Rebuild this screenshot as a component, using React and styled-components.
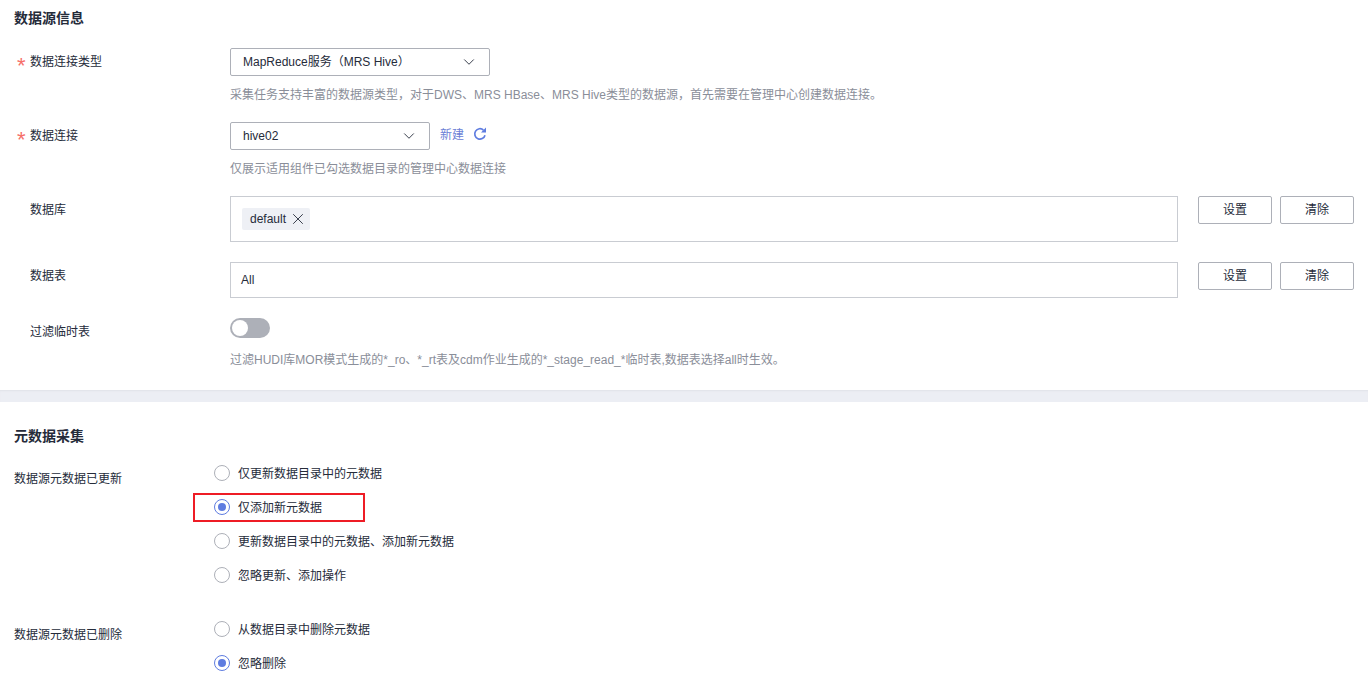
import styled, { createGlobalStyle } from 'styled-components';
import { X, ChevronDown } from 'lucide-react';

const GlobalStyle = createGlobalStyle`
  html, body {
    margin: 0;
    padding: 0;
    background: #fff;
    overflow: hidden;
  }
  body {
    font-family: "Liberation Sans", "Noto Sans CJK SC", sans-serif;
    font-size: 12px;
    line-height: 16px;
    color: #252b3a;
  }
`;

function Select({ value, width }) {
  return (
    <SelectBox $width={width}>
      <span>{value}</span>
      <ChevronDown size={18} strokeWidth={1.2} color="#252b3a" />
    </SelectBox>
  );
}

function RefreshIcon() {
  return (
    <RefreshSvg viewBox="0 0 16 16" width="16" height="16" fill="none">
      <path d="M13 9.2A5.2 5.2 0 1 1 11.4 4" stroke="#5e7ce0" strokeWidth="1.7" />
      <path d="M14 1.6V6.6H9z" fill="#5e7ce0" />
    </RefreshSvg>
  );
}

function Radio({ checked, marked, children }) {
  return (
    <RadioRow>
      <RadioDot $checked={checked} />
      <RadioText>{children}</RadioText>
      {marked && <RedMark />}
    </RadioRow>
  );
}

function Actions() {
  return (
    <ActionGroup>
      <Button>设置</Button>
      <Button>清除</Button>
    </ActionGroup>
  );
}

export default function App() {
  return (
    <Page>
      <GlobalStyle />
      <SourceSection>
        <Title>数据源信息</Title>
        <Fields>
          <Field $height={74}>
            <Label $required>数据连接类型</Label>
            <div>
              <Select value="MapReduce服务（MRS Hive）" width={260} />
              <Hint>采集任务支持丰富的数据源类型，对于DWS、MRS HBase、MRS Hive类型的数据源，首先需要在管理中心创建数据连接。</Hint>
            </div>
          </Field>
          <Field $height={74}>
            <Label $required>数据连接</Label>
            <div>
              <InlineRow>
                <Select value="hive02" width={200} />
                <LinkText>新建</LinkText>
                <RefreshIcon />
              </InlineRow>
              <Hint>仅展示适用组件已勾选数据目录的管理中心数据连接</Hint>
            </div>
          </Field>
          <Field $height={66}>
            <Label>数据库</Label>
            <WideRow>
              <TagBox>
                <Tag>
                  default
                  <X size={18} strokeWidth={1.2} />
                </Tag>
              </TagBox>
              <Actions />
            </WideRow>
          </Field>
          <Field $height={56}>
            <Label>数据表</Label>
            <WideRow>
              <TextBox>All</TextBox>
              <Actions />
            </WideRow>
          </Field>
          <Field>
            <Label>过滤临时表</Label>
            <div>
              <Switch />
              <SwitchHint>过滤HUDI库MOR模式生成的*_ro、*_rt表及cdm作业生成的*_stage_read_*临时表,数据表选择all时生效。</SwitchHint>
            </div>
          </Field>
        </Fields>
      </SourceSection>
      <Band />
      <CollectSection>
        <CollectTitle>元数据采集</CollectTitle>
        <RadioField>
          <RadioLabel>数据源元数据已更新</RadioLabel>
          <RadioList>
            <Radio>仅更新数据目录中的元数据</Radio>
            <Radio checked marked>仅添加新元数据</Radio>
            <Radio>更新数据目录中的元数据、添加新元数据</Radio>
            <Radio>忽略更新、添加操作</Radio>
          </RadioList>
        </RadioField>
        <RadioField>
          <RadioLabel>数据源元数据已删除</RadioLabel>
          <RadioList>
            <Radio>从数据目录中删除元数据</Radio>
            <Radio checked>忽略删除</Radio>
          </RadioList>
        </RadioField>
      </CollectSection>
    </Page>
  );
}

const Page = styled.div`
  width: 1368px;
  height: 692px;
  overflow: hidden;
  background: #fff;
`;

const SourceSection = styled.section`
  height: 390px;
  padding: 10px 14px 0;
  box-sizing: border-box;
`;

const Title = styled.h2`
  margin: 0 0 21px;
  height: 17px;
  line-height: 17px;
  font-size: 14px;
  font-weight: 700;
  color: #252b3a;
`;

const Fields = styled.div`
  display: flex;
  flex-direction: column;
`;

const Field = styled.div`
  display: grid;
  grid-template-columns: 216px 1fr;
  height: ${p => (p.$height ? `${p.$height}px` : 'auto')};
`;

const Label = styled.label`
  position: relative;
  padding-left: 16px;
  line-height: 28px;
  color: #252b3a;

  ${p =>
    p.$required &&
    `&::before {
      content: '*';
      position: absolute;
      left: 3px;
      top: 4px;
      color: #f66f6a;
      font-size: 22px;
    }`}
`;

const SelectBox = styled.div`
  display: flex;
  align-items: center;
  justify-content: space-between;
  box-sizing: border-box;
  width: ${p => p.$width}px;
  height: 28px;
  padding: 0 11px 0 12px;
  border: 1px solid #adb0b8;
  border-radius: 2px;
  background: #fff;
`;

const Hint = styled.p`
  margin: 11px 0 0;
  height: 16px;
  line-height: 16px;
  color: #8a8e99;
`;

const SwitchHint = styled(Hint)`
  margin-top: 14px;
`;

const InlineRow = styled.div`
  display: flex;
  align-items: center;
`;

const LinkText = styled.span`
  margin: -3px 0 0 10px;
  color: #6b80d6;
`;

const RefreshSvg = styled.svg`
  margin: -5px 0 0 8px;
`;

const WideRow = styled.div`
  display: flex;
  align-items: flex-start;
  gap: 20px;
`;

const TagBox = styled.div`
  display: flex;
  align-items: flex-start;
  box-sizing: border-box;
  width: 948px;
  height: 46px;
  padding: 11px 11px;
  border: 1px solid #c9ccd2;
`;

const Tag = styled.span`
  display: inline-flex;
  align-items: center;
  gap: 3px;
  height: 22px;
  padding: 0 3px 0 8px;
  border-radius: 2px;
  background: #eef0f5;
  color: #252b3a;
`;

const TextBox = styled.div`
  box-sizing: border-box;
  width: 948px;
  height: 36px;
  padding-left: 10px;
  line-height: 34px;
  border: 1px solid #c9ccd2;
`;

const ActionGroup = styled.div`
  display: flex;
  gap: 8px;
`;

const Button = styled.button`
  width: 74px;
  height: 28px;
  padding: 0;
  border: 1px solid #adb0b8;
  border-radius: 2px;
  background: #fff;
  color: #252b3a;
  font: inherit;
`;

const Switch = styled.div`
  position: relative;
  width: 40px;
  height: 20px;
  border-radius: 10px;
  background: #adb0b8;

  &::after {
    content: '';
    position: absolute;
    left: 2px;
    top: 2px;
    width: 16px;
    height: 16px;
    border-radius: 50%;
    background: #fff;
  }
`;

const Band = styled.div`
  height: 12px;
  background: #eceef4;
  box-shadow: inset 0 2px 2px -1px #e0e2e8;
`;

const CollectSection = styled.section`
  padding: 26px 14px 0;
`;

const CollectTitle = styled(Title)`
  margin-bottom: 11px;
`;

const RadioField = styled.div`
  display: grid;
  grid-template-columns: 200px 1fr;
  margin-bottom: 20px;
`;

const RadioLabel = styled.div`
  padding-top: 15px;
  line-height: 16px;
`;

const RadioList = styled.div`
  display: flex;
  flex-direction: column;
`;

const RadioRow = styled.div`
  position: relative;
  display: flex;
  align-items: center;
  gap: 8px;
  height: 34px;
`;

const RadioText = styled.span`
  padding-top: 2px;
`;

const RadioDot = styled.span`
  position: relative;
  box-sizing: border-box;
  width: 16px;
  height: 16px;
  border: 1px solid ${p => (p.$checked ? '#5e7ce0' : '#adb0b8')};
  border-radius: 50%;

  ${p =>
    p.$checked &&
    `&::after {
      content: '';
      position: absolute;
      left: 3px;
      top: 3px;
      width: 8px;
      height: 8px;
      border-radius: 50%;
      background: #5e7ce0;
    }`}
`;

const RedMark = styled.div`
  position: absolute;
  left: -21px;
  top: 3px;
  box-sizing: border-box;
  width: 172px;
  height: 29px;
  border: 2px solid #ee1c25;
`;
